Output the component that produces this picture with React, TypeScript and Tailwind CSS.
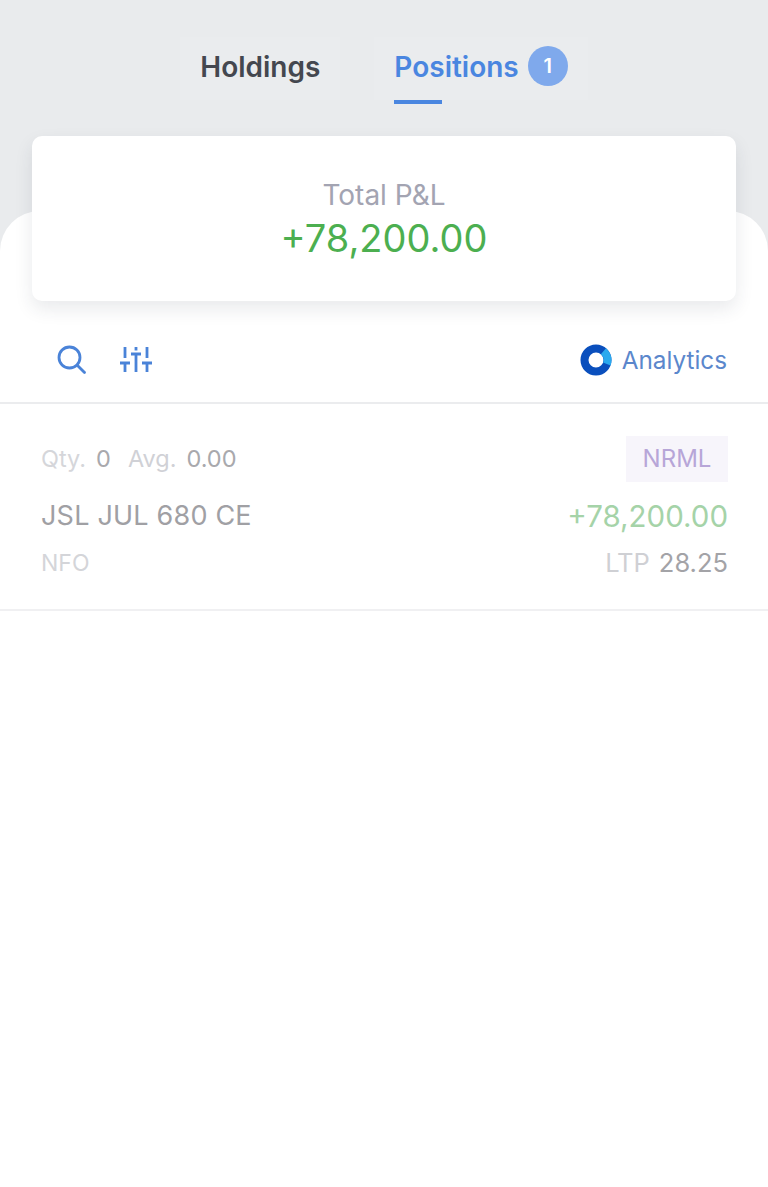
const inter = "font-['Inter','Noto_Sans',sans-serif]";

function SlidersIcon() {
  return (
    <svg width="34" height="28" viewBox="0 0 34 28" fill="none" stroke="#4a83d8" strokeWidth="2.800">
      <path d="M6 1v11M1 17h10M6 17v9M17 1v3.500M12 8h10M17 8v18M28 1v11M23 17h10M28 17v9" />
    </svg>
  );
}

function SearchIcon() {
  return (
    <svg width="30" height="30" viewBox="0 0 30 30" fill="none" stroke="#4a83d8" strokeWidth="2.800" strokeLinecap="round">
      <circle cx="12.500" cy="12.500" r="10.500" />
      <path d="M20.500 20.500l7 7" />
    </svg>
  );
}

function AnalyticsLogo() {
  return (
    <svg width="32" height="32" viewBox="0 0 32 32" fill="none" strokeWidth="8">
      <circle cx="16" cy="16" r="11.500" stroke="#0a4fbd" />
      <path d="M23.400 7.200A11.500 11.500 0 0 1 26.800 20" stroke="#2aa9ee" />
    </svg>
  );
}

export default function App() {
  return (
    <div className={`${inter} w-[768px] h-[1187px] bg-white overflow-hidden`}>
      {/* Tabs + summary card */}
      <div className="bg-[#e9ebed] h-[251px]">
        <div className="h-[136px] flex justify-center">
          <div className="flex items-start gap-[34px] pt-[37px]">
            <div className="h-[63px] px-[20px] pt-[9px] bg-[#eaecee] text-[28px] leading-[42px] font-semibold text-[#44474f]">Holdings</div>
            <div className="flex flex-col">
              <div className="h-[63px] px-[20px] pt-[9px] bg-[#eaecee] flex items-start gap-[9px]">
                <div className="text-[28px] leading-[42px] font-semibold text-[#4a86e0]">Positions</div>
                <div className="w-[40px] h-[40px] rounded-full bg-[#7fa9ec] text-white text-[20px] font-semibold flex items-center justify-center">1</div>
              </div>
              <div className="w-[48px] h-[4px] bg-[#4a86e0] ml-[20px]" />
            </div>
          </div>
        </div>
      </div>

      {/* White sheet */}
      <div className="relative bg-white rounded-t-[40px] -mt-[40px] h-[976px] flex flex-col">
        <div className="relative mx-[32px] -mt-[75px] h-[165px] shrink-0 bg-white rounded-[10px] shadow-[0_8px_18px_rgba(40,50,70,0.10)] flex flex-col items-center pt-[41px]">
          <div className="text-[28px] leading-[36px] text-[#a3a4b2]">Total P&amp;L</div>
          <div className="text-[38px] leading-[48px] text-[#4caf50] mt-[1px]">+78,200.00</div>
        </div>

        {/* Toolbar */}
        <div className="h-[103px] shrink-0 border-b-2 border-[#ebecee] flex items-center justify-between pl-[57px] pr-[41px] pt-[17px]">
          <div className="flex items-center gap-[32px]">
            <SearchIcon />
            <SlidersIcon />
          </div>
          <div className="flex items-center gap-[10px]">
            <AnalyticsLogo />
            <div className="text-[24.300px] leading-[32px] text-[#5b87cc]">Analytics</div>
          </div>
        </div>

        {/* Position row */}
        <div className="h-[207px] shrink-0 border-b-2 border-[#f0f0f2] pl-[41px] pr-[40px] pt-[32px]">
          <div className="flex items-center justify-between h-[46px]">
            <div className="flex items-center text-[23.500px] leading-[32px]">
              <span className="text-[#d5d6da]">Qty.</span>
              <span className="text-[#a9a9ad] ml-[10px]">0</span>
              <span className="text-[#d0d1d6] ml-[17px]">Avg.</span>
              <span className="text-[#a9a9ad] ml-[10px]">0.00</span>
            </div>
            <div className="w-[102px] h-[46px] bg-[#f7f5fb] flex items-center justify-center text-[24px] text-[#b7a6d8]">NRML</div>
          </div>
          <div className="flex items-center justify-between h-[36px] mt-[16px]">
            <div className="text-[27px] leading-[36px] tracking-[0.2px] text-[#a0a0a4]">JSL JUL 680 CE</div>
            <div className="text-[29.500px] leading-[36px] text-[#a5d3a8]">+78,200.00</div>
          </div>
          <div className="flex items-center justify-between h-[32px] mt-[13px]">
            <div className="text-[23px] leading-[32px] text-[#d4d5d9]">NFO</div>
            <div className="text-[25.500px] leading-[32px]">
              <span className="text-[#cfd0d4]">LTP</span>
              <span className="text-[#a3a3a7] ml-[9px]">28.25</span>
            </div>
          </div>
        </div>
      </div>
    </div>
  );
}
